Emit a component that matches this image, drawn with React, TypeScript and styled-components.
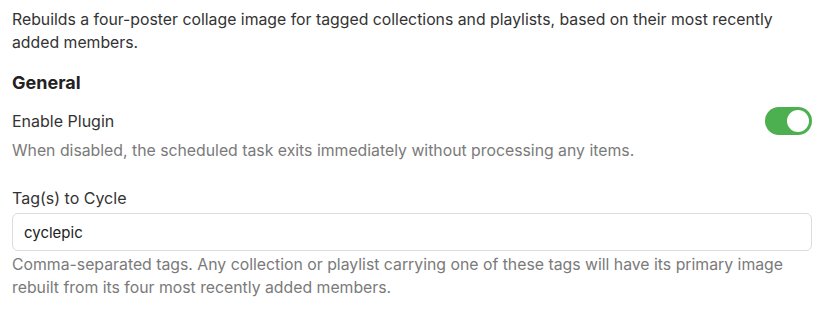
import React from "react";
import styled, { createGlobalStyle } from "styled-components";

const Global = createGlobalStyle`
  html, body { margin: 0; padding: 0; background: #ffffff; }
  body { font-family: Inter, "Noto Sans", sans-serif; color: #333333; }
  * { box-sizing: border-box; }
`;

const Page = styled.div`
  padding: 8px 20px 0 12px;
  display: flex;
  flex-direction: column;
`;

const Intro = styled.p`
  margin: 0;
  font-size: 15.8px;
  line-height: 23px;
  color: #333333;
`;

const SectionTitle = styled.h2`
  margin: 17px 0 0;
  font-size: 18px;
  line-height: 24px;
  font-weight: 700;
  color: #222222;
`;

const Field = styled.div<{ $gap?: number }>`
  display: flex;
  flex-direction: column;
  margin-top: ${(p) => p.$gap ?? 0}px;
`;

const ToggleRow = styled.div`
  display: flex;
  align-items: center;
  justify-content: space-between;
  height: 24px;
`;

const Label = styled.label`
  font-size: 16px;
  line-height: 24px;
  color: #333333;
`;

const Help = styled.div<{ $top?: number }>`
  margin-top: ${(p) => p.$top ?? 0}px;
  font-size: 15.8px;
  line-height: 23px;
  color: #7a7a7a;
`;

const Switch = styled.button<{ $on: boolean }>`
  width: 47px;
  height: 28px;
  border-radius: 14px;
  border: none;
  padding: 3px;
  background: ${(p) => (p.$on ? "#4caf50" : "#cccccc")};
  display: flex;
  justify-content: ${(p) => (p.$on ? "flex-end" : "flex-start")};
  cursor: pointer;
  flex-shrink: 0;
`;

const Knob = styled.span`
  width: 22px;
  height: 22px;
  border-radius: 50%;
  background: #ffffff;
`;

const Input = styled.input`
  margin: 3px 0 2px;
  width: 100%;
  height: 38px;
  border: 1px solid #dcdcdc;
  border-radius: 6px;
  padding: 0 11px;
  font-family: Inter, "Noto Sans", sans-serif;
  font-size: 15px;
  color: #222222;
  outline: none;
  background: #ffffff;
`;

export default function App() {
  const [on, setOn] = React.useState(true);
  const [tags, setTags] = React.useState("cyclepic");
  return (
    <>
      <Global />
      <Page>
        <Intro>
          Rebuilds a four-poster collage image for tagged collections and playlists, based on their most recently
          added members.
        </Intro>
        <SectionTitle>General</SectionTitle>
        <Field $gap={14}>
          <ToggleRow>
            <Label>Enable Plugin</Label>
            <Switch $on={on} onClick={() => setOn(!on)} aria-label="Enable Plugin">
              <Knob />
            </Switch>
          </ToggleRow>
          <Help $top={6}>When disabled, the scheduled task exits immediately without processing any items.</Help>
        </Field>
        <Field $gap={24}>
          <Label>Tag(s) to Cycle</Label>
          <Input value={tags} onChange={(e) => setTags(e.target.value)} />
          <Help>
            Comma-separated tags. Any collection or playlist carrying one of these tags will have its primary image
            rebuilt from its four most recently added members.
          </Help>
        </Field>
      </Page>
    </>
  );
}
